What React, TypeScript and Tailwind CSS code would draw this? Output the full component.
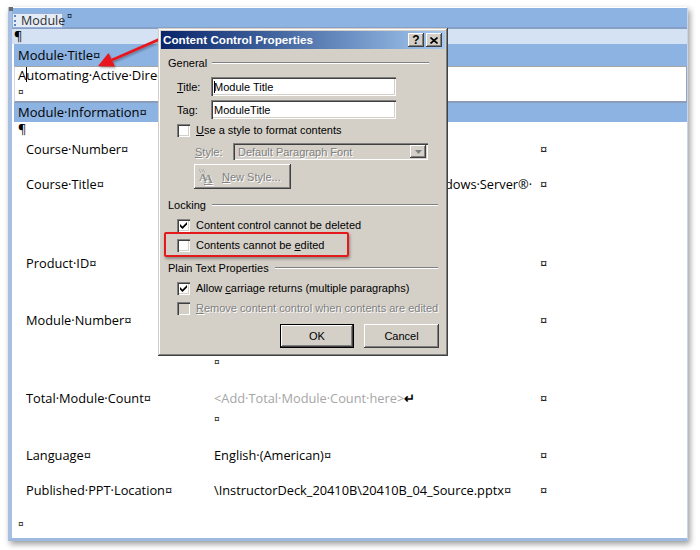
import React from "react";

// Classic 3D bevels used by the dialog controls
const raised =
  "shadow-[inset_-1px_-1px_0_#404040,inset_1px_1px_0_#ffffff,inset_-2px_-2px_0_#808080,inset_2px_2px_0_#d4d0c8]";
const sunken =
  "shadow-[inset_1px_1px_0_#808080,inset_2px_2px_0_#404040,inset_-1px_-1px_0_#ffffff,inset_-2px_-2px_0_#d4d0c8]";
const disabledText = "text-[#808080] [text-shadow:1px_1px_0_#ffffff]";

function Check({ checked, disabled }: { checked?: boolean; disabled?: boolean }) {
  return (
    <span
      className={`relative inline-block w-[13px] h-[13px] shrink-0 ${sunken} ${
        disabled ? "bg-[#d4d0c8]" : "bg-white"
      }`}
    >
      {checked && (
        <svg className="absolute left-[2px] top-[2px]" width="9" height="9" viewBox="0 0 9 9">
          <path d="M1 3 L3.5 5.5 L8 1 L8 3.5 L3.5 8 L1 5.5 Z" fill="#000" />
        </svg>
      )}
    </span>
  );
}

function EtchedLine({ className }: { className: string }) {
  return <div className={`h-[2px] border-t border-t-[#808080] border-b border-b-white ${className}`} />;
}

function GroupHeader({ label, lineClass }: { label: string; lineClass: string }) {
  return (
    <div className="flex items-center h-[14px] ml-[7px]">
      <span className="leading-[14px]">{label}</span>
      <EtchedLine className={lineClass} />
    </div>
  );
}

function CheckRow({
  checked,
  disabled,
  children,
  className,
}: {
  checked?: boolean;
  disabled?: boolean;
  children: React.ReactNode;
  className: string;
}) {
  return (
    <div className={`flex items-center h-[14px] ml-[16px] gap-[6px] ${className}`}>
      <Check checked={checked} disabled={disabled} />
      <span className={`leading-[14px] whitespace-nowrap ${disabled ? disabledText : ""}`}>{children}</span>
    </div>
  );
}

function TitleButton({ children }: { children: React.ReactNode }) {
  return (
    <div
      className={`w-[16px] h-[14px] bg-[#d4d0c8] ${raised} flex items-center justify-center text-[12px] font-bold text-black leading-none`}
    >
      {children}
    </div>
  );
}

function Dialog() {
  return (
    <div
      className={`absolute left-[158px] top-[28px] w-[290px] h-[328px] bg-[#d4d0c8] p-[3px] flex flex-col font-['Liberation_Sans',Arial,sans-serif] text-[11px] text-black shadow-[inset_-1px_-1px_0_#404040,inset_1px_1px_0_#d4d0c8,inset_-2px_-2px_0_#808080,inset_2px_2px_0_#ffffff]`}
    >
      {/* caption bar */}
      <div className="h-[18px] shrink-0 bg-linear-to-r from-[#0a246a] to-[#a6caf0] flex items-center pl-[2px] pr-[3px] gap-[2px]">
        <span className="flex-1 text-white font-bold text-[11.7px] leading-none whitespace-nowrap">
          Content Control Properties
        </span>
        <TitleButton>?</TitleButton>
        <TitleButton>
          <svg width="8" height="7" viewBox="0 0 8 7">
            <path d="M0.5 0.5 L7.5 6.5 M7.5 0.5 L0.5 6.5" stroke="#000" strokeWidth="1.6" />
          </svg>
        </TitleButton>
      </div>

      {/* General */}
      <div className="mt-[7px]">
        <GroupHeader label="General" lineClass="flex-1 ml-[5px] mr-[16px]" />
      </div>

      <div className="flex items-center h-[19px] mt-[7px] ml-[16px]">
        <span className="w-[34px] leading-[14px]">
          <u>T</u>itle:
        </span>
        <div className={`relative w-[185px] h-[19px] bg-white ${sunken} flex items-center pl-[3px]`}>
          <span className="absolute left-[3px] top-[4px] w-px h-[12px] bg-black" />
          <span className="leading-[14px]">Module Title</span>
        </div>
      </div>

      <div className="flex items-center h-[19px] mt-[4px] ml-[16px]">
        <span className="w-[34px] leading-[14px]">
          Ta<u>g</u>:
        </span>
        <div className={`w-[185px] h-[19px] bg-white ${sunken} flex items-center pl-[3px]`}>
          <span className="leading-[14px]">ModuleTitle</span>
        </div>
      </div>

      <CheckRow className="mt-[4px]">
        <u>U</u>se a style to format contents
      </CheckRow>

      <div className="flex items-center h-[17px] mt-[6px] ml-[34px]">
        <span className={`w-[38px] leading-[14px] ${disabledText}`}>
          <u>S</u>tyle:
        </span>
        <div className={`w-[195px] h-[17px] bg-[#d4d0c8] ${sunken} flex items-center pl-[5px] pr-[2px]`}>
          <span className={`flex-1 leading-[14px] ${disabledText}`}>Default Paragraph Font</span>
          <div className={`w-[16px] h-[13px] bg-[#d4d0c8] ${raised} flex items-center justify-center`}>
            <svg width="7" height="4" viewBox="0 0 7 4">
              <path d="M0 0 H7 L3.5 4 Z" fill="#808080" />
            </svg>
          </div>
        </div>
      </div>

      <div className="mt-[4px] ml-[33px]">
        <div className={`w-[97px] h-[25px] bg-[#d4d0c8] ${raised} flex items-center pl-[4px]`}>
          <span className="relative w-[18px] h-[16px] mr-[6px] font-['Liberation_Serif',serif] font-bold text-[#8c8c8c] [text-shadow:1px_1px_0_#ffffff] leading-none">
            <span className="absolute left-[1px] top-[3px] text-[11px]">A</span>
            <span className="absolute left-[6px] top-[4px] text-[12px] underline">A</span>
            <svg className="absolute left-0 top-0" width="8" height="6" viewBox="0 0 8 6">
              <path d="M1 1h1M3 0h1M5 1h1M2 3h1M4 2h1M6 3h1" stroke="#9a9a9a" strokeWidth="1" />
            </svg>
          </span>
          <span className={`leading-[14px] ${disabledText}`}>
            <u>N</u>ew Style...
          </span>
        </div>
      </div>

      {/* Locking */}
      <div className="mt-[9px]">
        <GroupHeader label="Locking" lineClass="flex-1 ml-[6px] mr-[7px]" />
      </div>
      <CheckRow checked className="mt-[6px]">
        Content control cannot be deleted
      </CheckRow>
      <CheckRow className="mt-[6px]">
        Contents cannot be <u>e</u>dited
      </CheckRow>

      {/* Plain text */}
      <div className="mt-[9px]">
        <GroupHeader label="Plain Text Properties" lineClass="flex-1 ml-[6px] mr-[7px]" />
      </div>
      <CheckRow checked className="mt-[6px]">
        Allow <u>c</u>arriage returns (multiple paragraphs)
      </CheckRow>
      <CheckRow disabled className="mt-[6px]">
        <u>R</u>emove content control when contents are edited
      </CheckRow>

      <div className="flex justify-end gap-[10px] mt-[9px] mr-[6px]">
        <div className="w-[74px] h-[24px] border border-black">
          <div className={`w-full h-full bg-[#d4d0c8] ${raised} flex items-center justify-center leading-[14px]`}>
            OK
          </div>
        </div>
        <div className={`w-[75px] h-[24px] bg-[#d4d0c8] ${raised} flex items-center justify-center leading-[14px]`}>
          Cancel
        </div>
      </div>
    </div>
  );
}

function Cell({ children, className }: { children?: React.ReactNode; className?: string }) {
  return <div className={className}>{children}</div>;
}

function InfoRow({
  h,
  label,
  value,
}: {
  h: string;
  label: string;
  value: React.ReactNode;
}) {
  return (
    <div className={`flex ${h} leading-[21px] whitespace-nowrap`}>
      <Cell className="w-[202px] pl-[14px]">{label}</Cell>
      <Cell className="w-[326px]">{value}</Cell>
      <Cell>¤</Cell>
    </div>
  );
}

function Document() {
  return (
    <div className="w-[680px] h-[534px] bg-white border-t border-t-white border-l-[4px] border-l-[#a6bfe2] border-b-[3px] border-b-[#9db9e0] border-r border-r-[#c5d5ec] shadow-[2px_3px_6px_rgba(0,0,0,0.4)] flex flex-col font-['Open_Sans',sans-serif] text-[12.8px] text-black">
      {/* content control title strip */}
      <div className="relative h-[21px] shrink-0 bg-[#8db3e2] border-b-2 border-b-[#859fc5] pt-[5px]">
        <span className="absolute -left-[3px] -top-px w-[4px] h-[4px] bg-[#6b6b6b]" />
        <div className="flex items-start">
          <div className="h-[15px] w-[51px] bg-[#e4ecf7] border border-[#97b0d6] flex items-center pl-[1px]">
            <span className="w-[2px] h-[11px] border-l-2 border-dotted border-l-[#5a86c6]" />
            <span className="ml-[5px] text-[12.5px] leading-[13px] text-[#303030]">Module</span>
          </div>
          <span className="ml-[4px] -mt-[2px] text-[9px] leading-[10px]">¤</span>
        </div>
      </div>

      <div className="h-[15px] shrink-0 bg-[#d5e2f3] pl-[2px] leading-[15px]">¶</div>

      <div className="h-[22px] shrink-0 ml-[2px] bg-[#8db3e2] pl-[4px] leading-[22px] text-[13px]">
        Module·Title¤
      </div>

      <div className="h-[37px] shrink-0 ml-[2px] bg-white border-t border-t-[#a5a5a5] border-r border-r-[#9aa6b8] border-l border-l-[#d0d8e4] border-b-2 border-b-[#8a9cb8] pl-[3px] leading-[17px] text-[13px]">
        <div className="whitespace-nowrap">
          A
          <span className="relative">
            <span className="absolute left-0 top-[1px] w-px h-[15px] bg-black" />
          </span>
          utomating·Active·Directory·Domain·Services·Administration
        </div>
        <div className="text-[10px] leading-[17px]">¤</div>
      </div>

      <div className="h-[19px] shrink-0 ml-[2px] bg-[#8db3e2] pl-[4px] leading-[19px] text-[13px]">
        Module·Information¤
      </div>

      {/* module information table */}
      <div className="flex flex-col">
        <div className="h-[17px] pl-[6px] leading-[14px]">¶</div>
        <InfoRow h="h-[35px]" label="Course·Number¤" value="20410B¤" />
        <InfoRow
          h="h-[79px]"
          label="Course·Title¤"
          value={
            <>
              <div>
                <span className="tracking-[-0.12px]">Administering·Active·Directory·with·Win</span>dows·Server®·
              </div>
              <div>2012¤</div>
            </>
          }
        />
        <InfoRow h="h-[57px]" label="Product·ID¤" value="20410B¤" />
        <InfoRow
          h="h-[78px]"
          label="Module·Number¤"
          value={
            <>
              <div>4↵</div>
              <div>&nbsp;</div>
              <div className="text-[10px]">¤</div>
            </>
          }
        />
        <InfoRow
          h="h-[57px]"
          label="Total·Module·Count¤"
          value={
            <>
              <div>
                <span className="text-[#a6a6a6]">&lt;Add·Total·Module·Count·here&gt;</span>
                <span className="font-bold">↵</span>
              </div>
              <div className="text-[10px]">¤</div>
            </>
          }
        />
        <InfoRow h="h-[35px]" label="Language¤" value="English·(American)¤" />
        <InfoRow
          h="h-[34px]"
          label="Published·PPT·Location¤"
          value="\InstructorDeck_20410B\20410B_04_Source.pptx¤"
        />
        <div className="pl-[6px] leading-[21px] text-[10px]">¤</div>
      </div>
    </div>
  );
}

function Callouts() {
  return (
    <svg className="absolute left-0 top-0 pointer-events-none" width="700" height="550" viewBox="0 0 700 550">
      <defs>
        <filter id="soft" x="-20%" y="-20%" width="140%" height="140%">
          <feDropShadow dx="1" dy="1.5" stdDeviation="1.2" floodColor="#000" floodOpacity="0.35" />
        </filter>
      </defs>
      <g filter="url(#soft)">
        <line x1="176" y1="32" x2="112" y2="60" stroke="#e8161b" strokeWidth="2.6" />
        <polygon points="98,66 115,66.5 108.5,53" fill="#e8161b" />
      </g>
    </svg>
  );
}

export default function App() {
  return (
    <div className="relative w-[700px] h-[550px] bg-white overflow-hidden">
      <div className="pl-[8px] pt-[7px]">
        <Document />
      </div>
      <Callouts />
      <Dialog />
      {/* highlight around the edit lock option */}
      <div className="absolute left-[164px] top-[232px] w-[185px] h-[25px] border-2 border-[#e3191b] rounded-[2px] shadow-[1px_2px_3px_rgba(0,0,0,0.35)]" />
    </div>
  );
}
